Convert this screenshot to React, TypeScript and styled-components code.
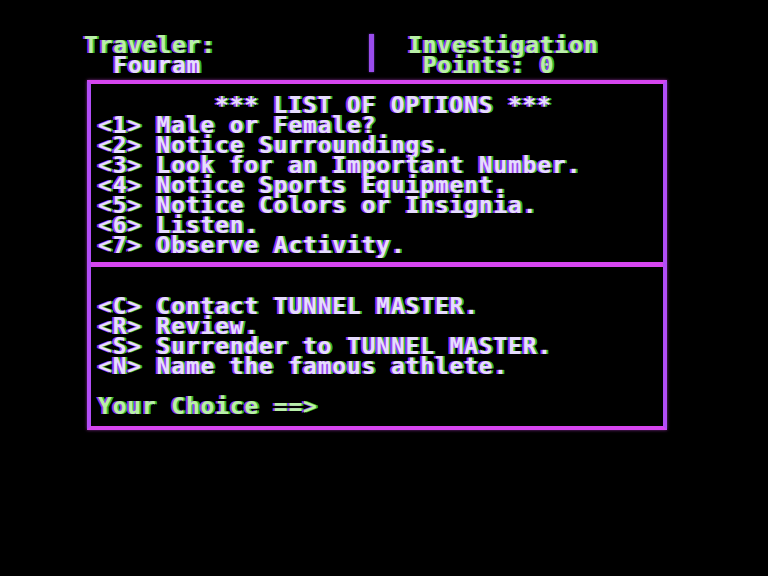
import React from 'react'
import styled, { createGlobalStyle } from 'styled-components'

const GlobalStyle = createGlobalStyle`
    html, body {
        margin: 0;
        padding: 0;
        background: #000;
    }
    body {
        width: 768px;
        height: 576px;
        overflow: hidden;
    }
`

const options = [
    'Male or Female?',
    'Notice Surroundings.',
    'Look for an Important Number.',
    'Notice Sports Equipment.',
    'Notice Colors or Insignia.',
    'Listen.',
    'Observe Activity.',
]

const commands = [
    { key: 'C', label: 'Contact TUNNEL MASTER.' },
    { key: 'R', label: 'Review.' },
    { key: 'S', label: 'Surrender to TUNNEL MASTER.' },
    { key: 'N', label: 'Name the famous athlete.' },
]

export default function App() {
    return (
        <Screen>
            <GlobalStyle />
            <Header>
                <HeaderBlock $width={280}>
                    <Line $tone="green">Traveler:</Line>
                    <Line>{'  Fouram'}</Line>
                </HeaderBlock>
                <BarCell>
                    <Bar />
                </BarCell>
                <HeaderBlock $pad={30}>
                    <Line $tone="green">Investigation</Line>
                    <Line $tone="green">{' Points: 0'}</Line>
                </HeaderBlock>
            </Header>

            <Frame>
                <Section $top={11} $bottom={7}>
                    <Title>*** LIST OF OPTIONS ***</Title>
                    {options.map((o, i) => (
                        <Line key={o}>{`<${i + 1}> ${o}`}</Line>
                    ))}
                </Section>
                <Divider />
                <Section $top={29} $bottom={10}>
                    {commands.map((c) => (
                        <Line key={c.key}>{`<${c.key}> ${c.label}`}</Line>
                    ))}
                    <Line />
                    <Line $tone="green">{'Your Choice ==>'}</Line>
                </Section>
            </Frame>
        </Screen>
    )
}

const Screen = styled.div`
    padding: 35px 0 0 84px;
    font-family: "DejaVu Sans Mono", "Liberation Mono", monospace;
    font-size: 23px;
    font-weight: bold;
    letter-spacing: 0.8px;
    color: #e6dcff;
`

const Header = styled.div`
    display: flex;
    height: 40px;
`

const HeaderBlock = styled.div<{ $width?: number; $pad?: number }>`
    width: ${({ $width }) => ($width ? `${$width}px` : 'auto')};
    padding-left: ${({ $pad }) => $pad ?? 0}px;
`

const BarCell = styled.div`
    width: 14px;
    display: flex;
    justify-content: center;
`

const Bar = styled.div`
    width: 5px;
    height: 38px;
    margin-top: -1px;
    background: #9a4cec;
    box-shadow: 0 0 2px rgba(150, 80, 255, 0.7);
`

const Line = styled.div<{ $tone?: 'green' | 'white' }>`
    height: 20px;
    line-height: 20px;
    white-space: pre;
    color: ${({ $tone }) => ($tone === 'green' ? '#b8f0a8' : '#e6dcff')};
    text-shadow:
        -2px 0 rgba(165, 55, 255, 0.95),
        2px 0 rgba(55, 210, 55, 0.9);
`

const Title = styled(Line)`
    padding-left: 117px;
`

const Frame = styled.div`
    margin: 5px 0 0 3px;
    width: 572px;
    border: 4px solid #d646f0;
    border-left-color: #b24ef7;
    border-right-color: #b24ef7;
    box-shadow: 0 0 3px rgba(214, 70, 240, 0.6);
`

const Section = styled.div<{ $top: number; $bottom: number }>`
    padding: ${({ $top }) => $top}px 0 ${({ $bottom }) => $bottom}px 7px;
`

const Divider = styled.div`
    height: 5px;
    background: #d646f0;
`
